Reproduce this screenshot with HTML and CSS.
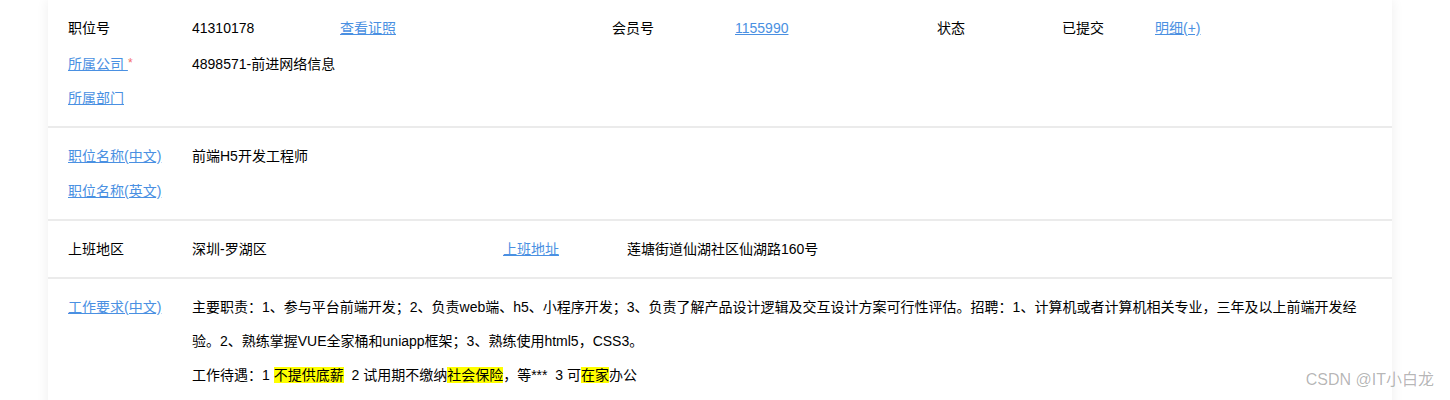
FILE: index.html
```html
<!DOCTYPE html>
<html lang="zh-CN">
<head>
<meta charset="utf-8">
<title>职位详情</title>
<link rel="stylesheet" href="styles.css">
</head>
<body>
<div class="page">
  <div class="card">
    <div class="sec">
      <div class="row row-top">
        <span class="lbl">职位号</span>
        <span>41310178</span>
        <span><a href="#">查看证照</a></span>
        <span>会员号</span>
        <span><a href="#">1155990</a></span>
        <span>状态</span>
        <span>已提交</span>
        <span><a href="#">明细(+)</a></span>
      </div>
      <div class="row row-two">
        <span class="lbl"><a href="#">所属公司&nbsp;</a><span class="req">*</span></span>
        <span>4898571-前进网络信息</span>
      </div>
      <div class="row row-two">
        <span class="lbl"><a href="#">所属部门</a></span>
        <span></span>
      </div>
    </div>

    <div class="sec">
      <div class="row row-two">
        <span class="lbl"><a href="#">职位名称(中文)</a></span>
        <span>前端H5开发工程师</span>
      </div>
      <div class="row row-two">
        <span class="lbl"><a href="#">职位名称(英文)</a></span>
        <span></span>
      </div>
    </div>

    <div class="sec">
      <div class="row row-addr">
        <span class="lbl">上班地区</span>
        <span>深圳-罗湖区</span>
        <span><a href="#">上班地址</a></span>
        <span>莲塘街道仙湖社区仙湖路160号</span>
      </div>
    </div>

    <div class="sec">
      <div class="row row-two row-auto">
        <span class="lbl"><a href="#">工作要求(中文)</a></span>
        <div class="desc">
          <p>主要职责：1、参与平台前端开发；2、负责web端、h5、小程序开发；3、负责了解产品设计逻辑及交互设计方案可行性评估。招聘：1、计算机或者计算机相关专业，三年及以上前端开发经验。2、熟练掌握VUE全家桶和uniapp框架；3、熟练使用html5，CSS3。</p>
          <p>工作待遇：1 <mark class="hl">不提供底薪</mark>&nbsp; 2 试用期不缴纳<mark class="hl">社会保险</mark>，等***&nbsp; 3 可<mark class="hl">在家</mark>办公</p>
        </div>
      </div>
    </div>
  </div>
  <div class="mark-csdn">CSDN @IT小白龙</div>
</div>
</body>
</html>
```

FILE: styles.css
```css
html, body {
  margin: 0;
  padding: 0;
  background: #fff;
}
body {
  font-family: "Liberation Sans", Arial, "Noto Sans CJK SC", sans-serif;
  font-size: 14px;
  color: #000;
}
.page {
  position: relative;
  height: 400px;
  overflow: hidden;
}
.card {
  margin-left: 48px;
  width: 1344px;
  min-height: 600px;
  background: #fff;
  box-shadow: 0 0 12px rgba(0, 0, 0, 0.07);
}
.sec {
  padding: 11px 20px 10px;
  border-bottom: 2px solid #ebebeb;
}
.row {
  display: grid;
  height: 35px;
  line-height: 35px;
  align-items: center;
}
.row-auto {
  height: auto;
  align-items: start;
}
.row-top {
  grid-template-columns: 124px 148px 272px 123px 202px 125px 93px 1fr;
}
.row-two {
  grid-template-columns: 124px 1fr;
}
.row-addr {
  grid-template-columns: 124px 311px 124px 1fr;
}
a:link, a:visited {
  color: #4a90e2;
  text-decoration: underline;
}
.req {
  color: #f56c6c;
  font-size: 12px;
  vertical-align: 2px;
}
.desc {
  padding-right: 4px;
}
.desc p {
  margin: 0;
  line-height: 34px;
}
.hl {
  background: #ffff00;
  color: #000;
}
.mark-csdn {
  position: absolute;
  right: 16px;
  bottom: 10px;
  font-size: 16px;
  color: rgba(0, 0, 0, 0.3);
}
```
